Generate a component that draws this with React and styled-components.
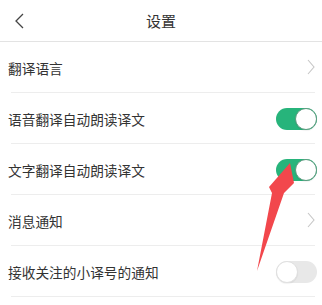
import React from "react";
import styled, { createGlobalStyle } from "styled-components";

const Global = createGlobalStyle`
  html, body { margin: 0; padding: 0; background: #fff; }
  body { font-family: "Noto Sans CJK SC", "Noto Sans", sans-serif; color: #333; }
`;

const Page = styled.div`
  position: relative;
  width: 322px;
  height: 305px;
  overflow: hidden;
  background: #fff;
`;

const Header = styled.header`
  height: 41px;
  border-bottom: 1px solid #e3e3e3;
  display: flex;
  align-items: center;
  justify-content: center;
  position: relative;
`;

const Back = styled.button`
  position: absolute;
  left: 12px;
  top: 11px;
  width: 14px;
  height: 20px;
  padding: 0;
  border: 0;
  background: none;
  display: flex;
  align-items: center;
  justify-content: center;
`;

const Title = styled.h1`
  margin: 0;
  font-size: 15px;
  font-weight: 400;
  color: #333;
  letter-spacing: 0;
`;

const List = styled.div`
  display: flex;
  flex-direction: column;
`;

const Row = styled.div`
  height: 49px;
  display: flex;
  align-items: center;
  justify-content: space-between;
  padding: 1px 5px 0 8px;
  position: relative;
  &::after {
    content: "";
    position: absolute;
    left: 11px;
    right: 7px;
    bottom: -1px;
    height: 1px;
    background: #ededed;
  }
  margin-bottom: 1px;
`;

const Label = styled.span`
  font-size: 13.7px;
  color: #333;
`;

const Toggle = styled.div`
  width: 41px;
  height: 22px;
  border-radius: 11px;
  background: ${(p) => (p.on ? "#27b47b" : "#e8e8e8")};
  position: relative;
  margin-right: 0;
  &::after {
    content: "";
    position: absolute;
    top: 0;
    ${(p) => (p.on ? "right: 0;" : "left: 0;")}
    width: 20px;
    height: 20px;
    border-radius: 50%;
    background: #fff;
    border: 1px solid ${(p) => (p.on ? "#5c9a7e" : "#e0e0e0")};
    box-shadow: 0 1px 1px rgba(0,0,0,0.06);
  }
`;

const Chevron = styled.svg`
  width: 8px;
  height: 16px;
  margin-right: 2px;
  margin-top: -2px;
`;

const Arrow = styled.svg`
  position: absolute;
  left: 0;
  top: 0;
  width: 322px;
  height: 305px;
  pointer-events: none;
`;

const items = [
  { label: "翻译语言", type: "link" },
  { label: "语音翻译自动朗读译文", type: "toggle", on: true },
  { label: "文字翻译自动朗读译文", type: "toggle", on: true },
  { label: "消息通知", type: "link" },
  { label: "接收关注的小译号的通知", type: "toggle", on: false },
];

export default function App() {
  return (
    <Page>
      <Global />
      <Header>
        <Back aria-label="返回">
          <svg width="9" height="16" viewBox="0 0 9 16">
            <path d="M8 1 L1 8 L8 15" fill="none" stroke="#444" strokeWidth="1.3" />
          </svg>
        </Back>
        <Title>设置</Title>
      </Header>
      <List>
        {items.map((it) => (
          <Row key={it.label}>
            <Label>{it.label}</Label>
            {it.type === "toggle" ? (
              <Toggle on={it.on} />
            ) : (
              <Chevron viewBox="0 0 8 16">
                <path d="M1 1 L7 8 L1 15" fill="none" stroke="#c6c6c6" strokeWidth="1.1" />
              </Chevron>
            )}
          </Row>
        ))}
      </List>
      <Arrow viewBox="0 0 322 305">
        <polygon
          points="290,163 294,183 284,193 257,271 272,193 269,187"
          fill="#f2474c"
        />
      </Arrow>
    </Page>
  );
}
